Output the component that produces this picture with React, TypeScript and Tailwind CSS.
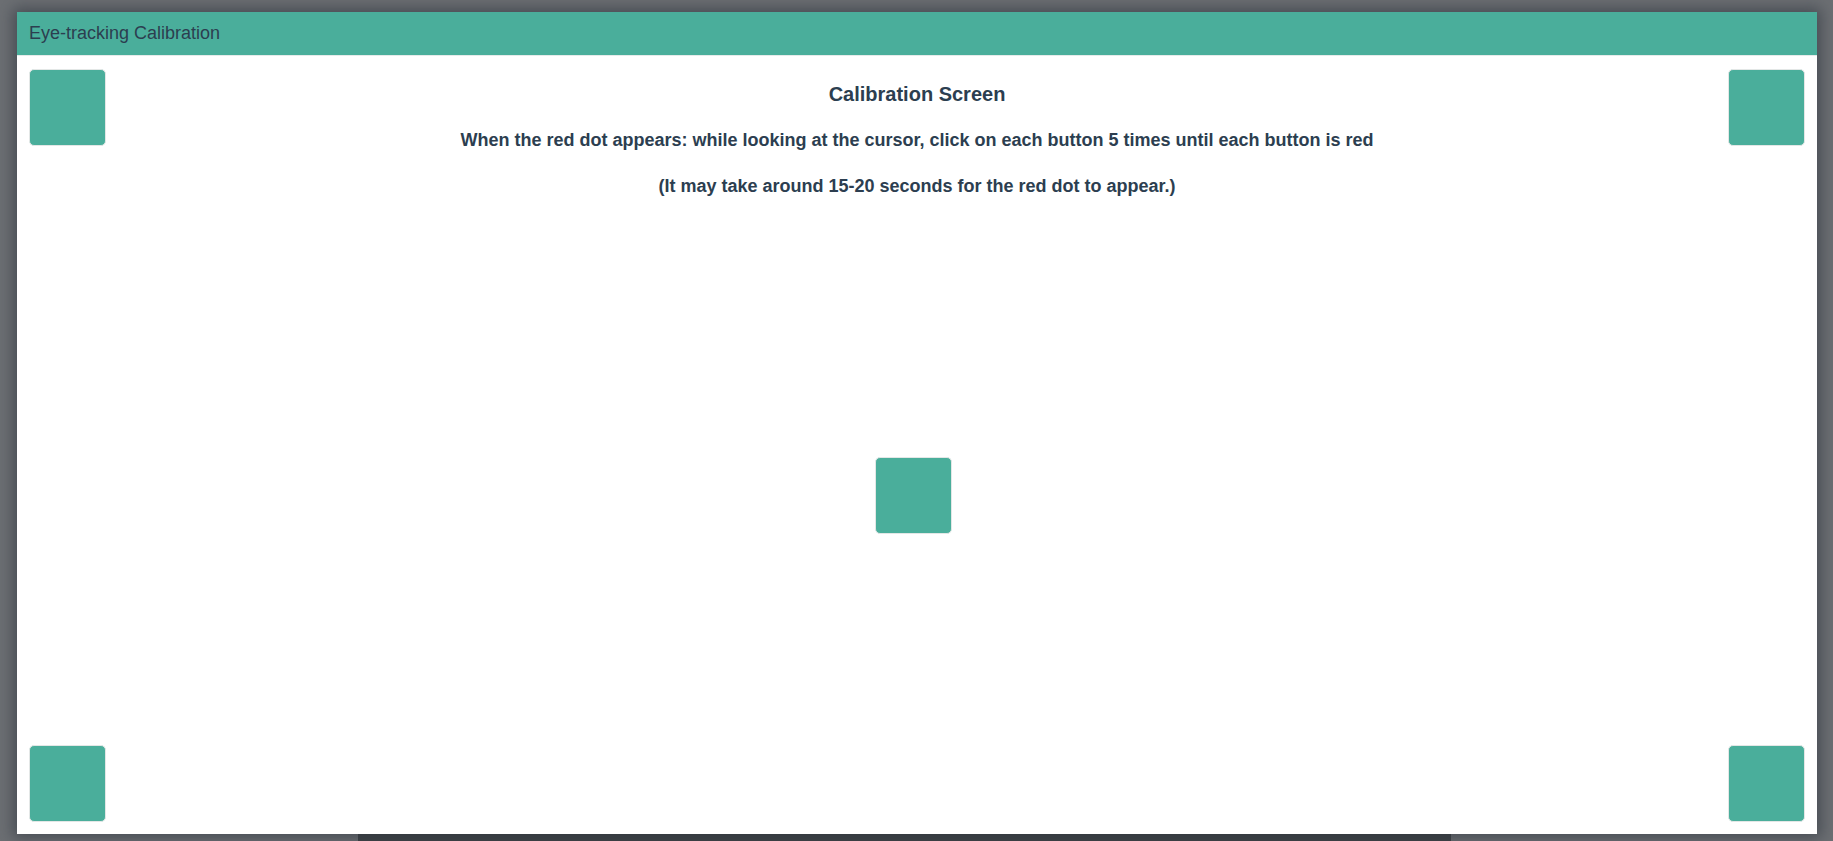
import React from "react"

const points = [
	"left-[12px] top-[13px]",
	"right-[12px] top-[13px]",
	"left-[858px] top-[401px]",
	"left-[12px] bottom-[12px]",
	"right-[12px] bottom-[12px]",
]

const CalibrationPoint: React.FC<{ className: string }> = ({ className }) => {
	return (
		<button
			className={
				"absolute w-[77px] h-[77px] rounded-[5px] bg-[#4aae9b] border border-[#e3e7e6] cursor-pointer " +
				className
			}
		></button>
	)
}

export default function App() {
	return (
		<div className="w-[1833px] h-[841px] bg-[#6c6f73] overflow-hidden flex flex-col font-['Liberation_Sans',Arial,sans-serif]">
			<div className="ml-[17px] mt-[12px] w-[1800px] h-[822px] bg-white flex flex-col shadow-[0_0_14px_4px_rgba(40,48,56,0.55)] relative z-10">
				<div className="h-[44px] bg-[#4aae9b] border-b border-[#e6ebea] px-[12px] text-[18px] leading-[42px] text-[#2c3e50]">
					Eye-tracking Calibration
				</div>
				<div className="relative flex-1 flex flex-col items-center pt-[26px] text-[#2c3e50] font-bold">
					<h2 className="text-[20px] leading-[24px]">Calibration Screen</h2>
					<p className="mt-[22px] text-[18px] leading-[24px]">
						When the red dot appears: while looking at the cursor, click on each button 5 times until each button is red
					</p>
					<p className="mt-[22px] text-[18px] leading-[24px]">
						(It may take around 15-20 seconds for the red dot to appear.)
					</p>
					{points.map((p, i) => (
						<CalibrationPoint key={i} className={p} />
					))}
				</div>
			</div>
			<div className="ml-[358px] w-[1093px] flex-1 bg-[#3f4347]"></div>
		</div>
	)
}
